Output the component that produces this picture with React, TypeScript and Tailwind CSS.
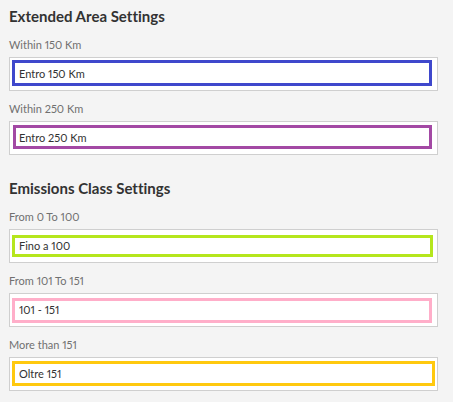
type Field = {
  id: string;
  label: string;
  value: string;
  marker: string;
};

type Group = { title: string; fields: Field[] };

const groups: Group[] = [
  {
    title: "Extended Area Settings",
    fields: [
      { id: "within-150", label: "Within 150 Km", value: "Entro 150 Km", marker: "top-[2px] bottom-[4px] left-[2px] right-[5px] border-[#3f48cc]" },
      { id: "within-250", label: "Within 250 Km", value: "Entro 250 Km", marker: "top-[3px] bottom-[5px] left-[3px] right-[5px] border-[#a349a4]" },
    ],
  },
  {
    title: "Emissions Class Settings",
    fields: [
      { id: "from-0", label: "From 0 To 100", value: "Fino a 100", marker: "top-[5px] bottom-[5px] left-[2px] right-[4px] border-[#b5e61d]" },
      { id: "from-101", label: "From 101 To 151", value: "101 - 151", marker: "top-[4px] bottom-[3px] left-[2px] right-[5px] border-[#ffaec9]" },
      { id: "over-151", label: "More than 151", value: "Oltre 151", marker: "top-[3px] bottom-[4px] left-[2px] right-[2px] border-[#ffc90e]" },
    ],
  },
];

function TextField({ field }: { field: Field }) {
  return (
    <div className="flex flex-col gap-1">
      <label htmlFor={field.id} className="text-[11px] leading-4 text-[#707070]">
        {field.label}
      </label>
      <div className="relative flex h-[34px] border border-[#cfcfcf] bg-white">
        <input
          id={field.id}
          type="text"
          defaultValue={field.value}
          className="w-full min-w-0 bg-transparent px-[9px] text-[11px] text-[#323232] proportional-nums outline-none"
        />
        <span className={`pointer-events-none absolute border-[3px] ${field.marker}`} />
      </div>
    </div>
  );
}

export default function App() {
  return (
    <main className="flex min-h-screen flex-col gap-[21px] bg-[#f4f4f4] pt-1 pr-[15px] pb-[11px] pl-[9px] font-['Lato','Noto_Sans',sans-serif] proportional-nums">
      {groups.map((group) => (
        <section key={group.title}>
          <h2 className="mb-[9px] text-[15px] leading-6 font-bold text-[#323232] [font-variant-ligatures:none]">
            {group.title}
          </h2>
          <div className="flex flex-col gap-[10px]">
            {group.fields.map((field) => (
              <TextField key={field.id} field={field} />
            ))}
          </div>
        </section>
      ))}
    </main>
  );
}
